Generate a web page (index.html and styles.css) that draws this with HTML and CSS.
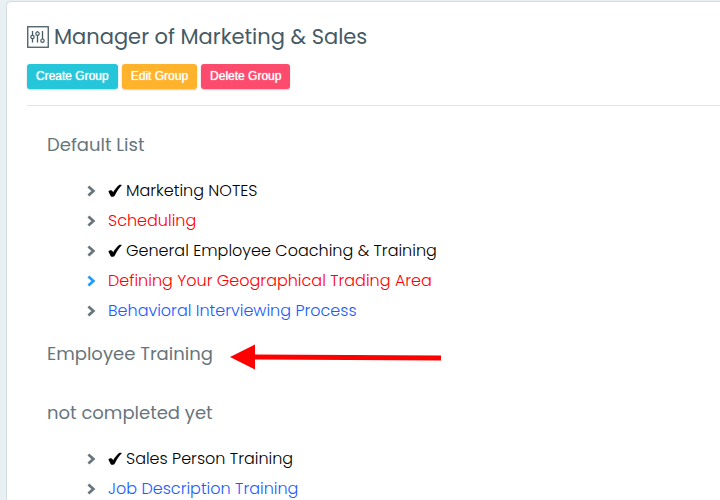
FILE: index.html
```html
<!DOCTYPE html>
<html lang="en">
<head>
    <meta charset="UTF-8">
    <meta name="viewport" content="width=device-width, initial-scale=1.0">
    <title>Manager of Marketing &amp; Sales</title>
    <link rel="stylesheet" href="styles.css">
</head>
<body>
    <svg class="sprite" aria-hidden="true">
        <symbol id="chevron" viewBox="0 0 10 12">
            <path d="M1.4 1.4 L6.4 6 L1.4 10.6" fill="none" stroke="currentColor" stroke-width="2.7"/>
        </symbol>
        <symbol id="check" viewBox="0 0 14 14">
            <path d="M0.4 7.6 C1.4 6 3.8 5.8 4.4 6.9 L5.1 8.2 C7 5.2 9 2.6 10.8 1.2 C11.6 0.6 13.2 0.6 13.8 1.2 C11 4 8.6 7.8 6.8 11.6 C6.1 13 3.3 13.3 2.6 12 Z" fill="currentColor"/>
        </symbol>
    </svg>
    <main class="card">
        <h1 class="title">
            <svg class="title-icon" viewBox="0 0 22 22" fill="none" stroke="currentColor" aria-hidden="true">
                <rect x="0.75" y="0.75" width="20.5" height="20.5" stroke-width="1.3"/>
                <path d="M5.5 5v4.3M5.5 12.7v3.8M10.5 5v1M10.5 9.4v7.1M15.5 5v8" stroke-width="1.3"/>
                <circle cx="5.5" cy="11" r="1.7" stroke-width="1.2"/>
                <circle cx="10.5" cy="7.7" r="1.7" stroke-width="1.2"/>
                <circle cx="15.5" cy="14.7" r="1.7" stroke-width="1.2"/>
            </svg>
            <span>Manager of Marketing &amp; Sales</span>
        </h1>
        <div class="actions">
            <button type="button" class="btn btn-create">Create Group</button>
            <button type="button" class="btn btn-edit">Edit Group</button>
            <button type="button" class="btn btn-delete">Delete Group</button>
        </div>
        <hr class="divider">
        <div class="groups">
            <section class="group">
                <h2 class="group-name">Default List</h2>
                <ul class="items">
                    <li><svg class="chevron"><use href="#chevron"/></svg><a href="#" class="done"><svg class="check"><use href="#check"/></svg>Marketing NOTES</a></li>
                    <li><svg class="chevron"><use href="#chevron"/></svg><a href="#" class="late">Scheduling</a></li>
                    <li><svg class="chevron"><use href="#chevron"/></svg><a href="#" class="done"><svg class="check"><use href="#check"/></svg>General Employee Coaching &amp; Training</a></li>
                    <li class="active"><svg class="chevron"><use href="#chevron"/></svg><a href="#" class="late">Defining Your Geographical Trading Area</a></li>
                    <li><svg class="chevron"><use href="#chevron"/></svg><a href="#" class="open">Behavioral Interviewing Process</a></li>
                </ul>
            </section>
            <section class="group">
                <h2 class="group-name">Employee Training
                    <svg class="arrow" viewBox="0 0 212 26" fill="#ff0000" aria-hidden="true">
                        <path d="M0 13 L25 0.5 V10.6 L211 11.6 V16.4 L25 15.4 V25.5 Z"/>
                    </svg>
                </h2>
            </section>
            <section class="group">
                <h2 class="group-name">not completed yet</h2>
                <ul class="items">
                    <li><svg class="chevron"><use href="#chevron"/></svg><a href="#" class="done"><svg class="check"><use href="#check"/></svg>Sales Person Training</a></li>
                    <li><svg class="chevron"><use href="#chevron"/></svg><a href="#" class="open">Job Description Training</a></li>
                </ul>
            </section>
        </div>
    </main>
</body>
</html>
```
FILE: styles.css
```css
:root {
    --page: #e9f0f4;
    --border: #d3dde2;
    --heading: #455a64;
    --muted: #67757c;
    --red: #ff0000;
    --blue: #1a5cff;
    --active: #1e9bff;
}
* {
    box-sizing: border-box;
}
body {
    margin: 0;
    min-height: 100vh;
    background: var(--page);
    color: var(--muted);
    font-family: Poppins, Inter, sans-serif;
    font-size: 16px;
    font-weight: 300;
}
.sprite {
    display: none;
}
.card {
    margin: 1px 0 0 6px;
    padding: 20px 0 0 20px;
    background: #fff;
    border: 1px solid var(--border);
    border-width: 1px 0 0 1px;
    border-radius: 5px 0 0 0;
}
.title {
    display: flex;
    align-items: center;
    gap: 5px;
    margin: 0 0 12px;
    color: var(--heading);
    font-size: 21px;
    font-weight: 400;
    line-height: 30px;
}
.title-icon {
    width: 22px;
    height: 22px;
    flex: none;
}
.actions {
    display: flex;
    gap: 4px;
}
.btn {
    height: 25px;
    padding: 0 9px 2px;
    border: 0;
    border-radius: 3px;
    color: #fff;
    font-family: "Liberation Sans", Arial, sans-serif;
    font-size: 12px;
    text-shadow: 0 0 1px #fff;
    box-shadow: 0 1px 2px rgba(0, 0, 0, 0.2);
    cursor: pointer;
}
.btn-create {
    background: #26c6da;
}
.btn-edit {
    background: #ffb22b;
}
.btn-delete {
    background: #fc4b6c;
}
.divider {
    margin: 16px 0 27px;
    border: 0;
    border-top: 1px solid #e2e4e6;
}
.groups {
    padding-left: 20px;
}
.group {
    padding-bottom: 16px;
}
.group:last-child {
    padding-bottom: 0;
}
.group-name {
    position: relative;
    width: fit-content;
    margin: 0;
    padding-bottom: 19px;
    font-size: 18px;
    font-weight: 400;
    line-height: 24px;
}
.arrow {
    position: absolute;
    top: 2px;
    left: 100%;
    width: 212px;
    height: 26px;
    margin-left: 17px;
}
.items {
    margin: 0;
    padding: 0 0 0 40px;
    list-style: none;
}
.items li {
    display: flex;
    align-items: center;
    gap: 11px;
    line-height: 30px;
}
.items a {
    text-decoration: none;
}
.items .active {
    color: var(--active);
}
.chevron {
    width: 10px;
    height: 12px;
    flex: none;
}
.check {
    width: 14px;
    height: 14px;
    margin-right: 4px;
    vertical-align: -2px;
}
.done {
    color: #000;
}
.late {
    color: var(--red);
}
.open {
    color: var(--blue);
}
```
